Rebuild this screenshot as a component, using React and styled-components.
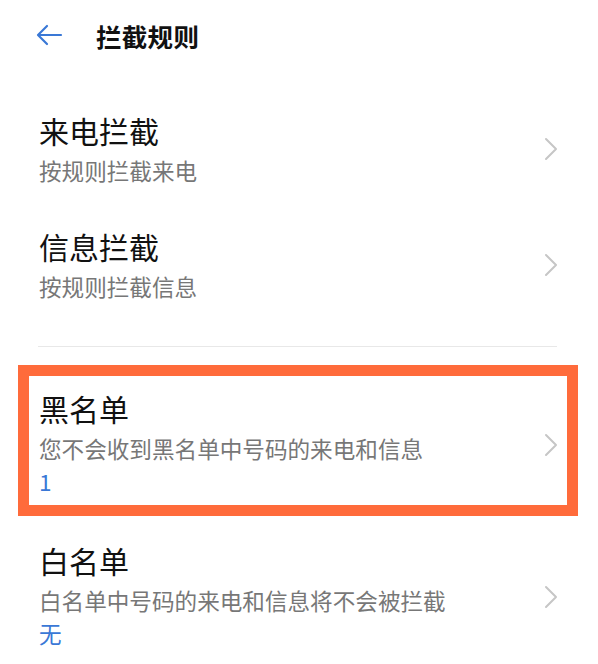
import React from 'react';
import styled, { createGlobalStyle } from 'styled-components';

const GlobalStyle = createGlobalStyle`
  body {
    margin: 0;
    background: #fff;
    font-family: "Noto Sans CJK SC", "Noto Sans", sans-serif;
    color: #111;
  }
`;

const Page = styled.div`
  width: 598px;
  min-height: 664px;
  background: #fff;
  overflow: hidden;
`;

const Header = styled.header`
  height: 70px;
  display: flex;
  align-items: center;
  padding-left: 36px;
`;

const BackButton = styled.button`
  border: 0;
  background: none;
  padding: 0;
  display: flex;
  width: 27px;
  height: 22px;
  cursor: pointer;
`;

const Title = styled.h1`
  margin: 0 0 0 33px;
  font-size: 25.5px;
  font-weight: 600;
  letter-spacing: 0.3px;
`;

const List = styled.div`
  margin-top: 20px;
`;

const Row = styled.div`
  display: flex;
  align-items: center;
  padding: ${(p) => p.$pad || '22px 40px 20px 39px'};
`;

const Texts = styled.div`
  flex: 1;
  display: flex;
  flex-direction: column;
`;

const RowTitle = styled.div`
  font-size: 30px;
  line-height: 36px;
`;

const RowDesc = styled.div`
  margin-top: 8px;
  font-size: 22.6px;
  line-height: 30px;
  color: #777;
`;

const RowValue = styled.div`
  font-size: 22.6px;
  line-height: 35px;
  color: #3a78d6;
`;

const Divider = styled.hr`
  border: 0;
  height: 1px;
  background: #e8e8e8;
  margin: 24px 41px 18px 38px;
`;

const Highlight = styled.div`
  margin: 0 20px 0 18px;
  border: 11px solid #ff6b3b;
`;

const Chevron = () => (
  <svg width="14" height="24" viewBox="0 0 14 24" fill="none">
    <path d="M2 2 L12 12 L2 22" stroke="#c6c6c6" strokeWidth="2" strokeLinecap="round" strokeLinejoin="round" />
  </svg>
);

const Item = ({ title, desc, value, pad }) => (
  <Row $pad={pad}>
    <Texts>
      <RowTitle>{title}</RowTitle>
      <RowDesc>{desc}</RowDesc>
      {value && <RowValue>{value}</RowValue>}
    </Texts>
    <Chevron />
  </Row>
);

export default function App() {
  return (
    <Page>
      <GlobalStyle />
      <Header>
        <BackButton aria-label="返回">
          <svg width="27" height="22" viewBox="0 0 27 22" fill="none">
            <path d="M25 11 H3 M11 2 L2 11 L11 20" stroke="#3a78d6" strokeWidth="2.2" strokeLinecap="round" strokeLinejoin="round" />
          </svg>
        </BackButton>
        <Title>拦截规则</Title>
      </Header>
      <List>
        <Item title="来电拦截" desc="按规则拦截来电" />
        <Item title="信息拦截" desc="按规则拦截信息" />
        <Divider />
        <Highlight>
          <Item title="黑名单" desc="您不会收到黑名单中号码的来电和信息" value="1" pad="14px 9px 6px 10px" />
        </Highlight>
        <Item title="白名单" desc="白名单中号码的来电和信息将不会被拦截" value="无" pad="26px 40px 10px 39px" />
      </List>
    </Page>
  );
}
